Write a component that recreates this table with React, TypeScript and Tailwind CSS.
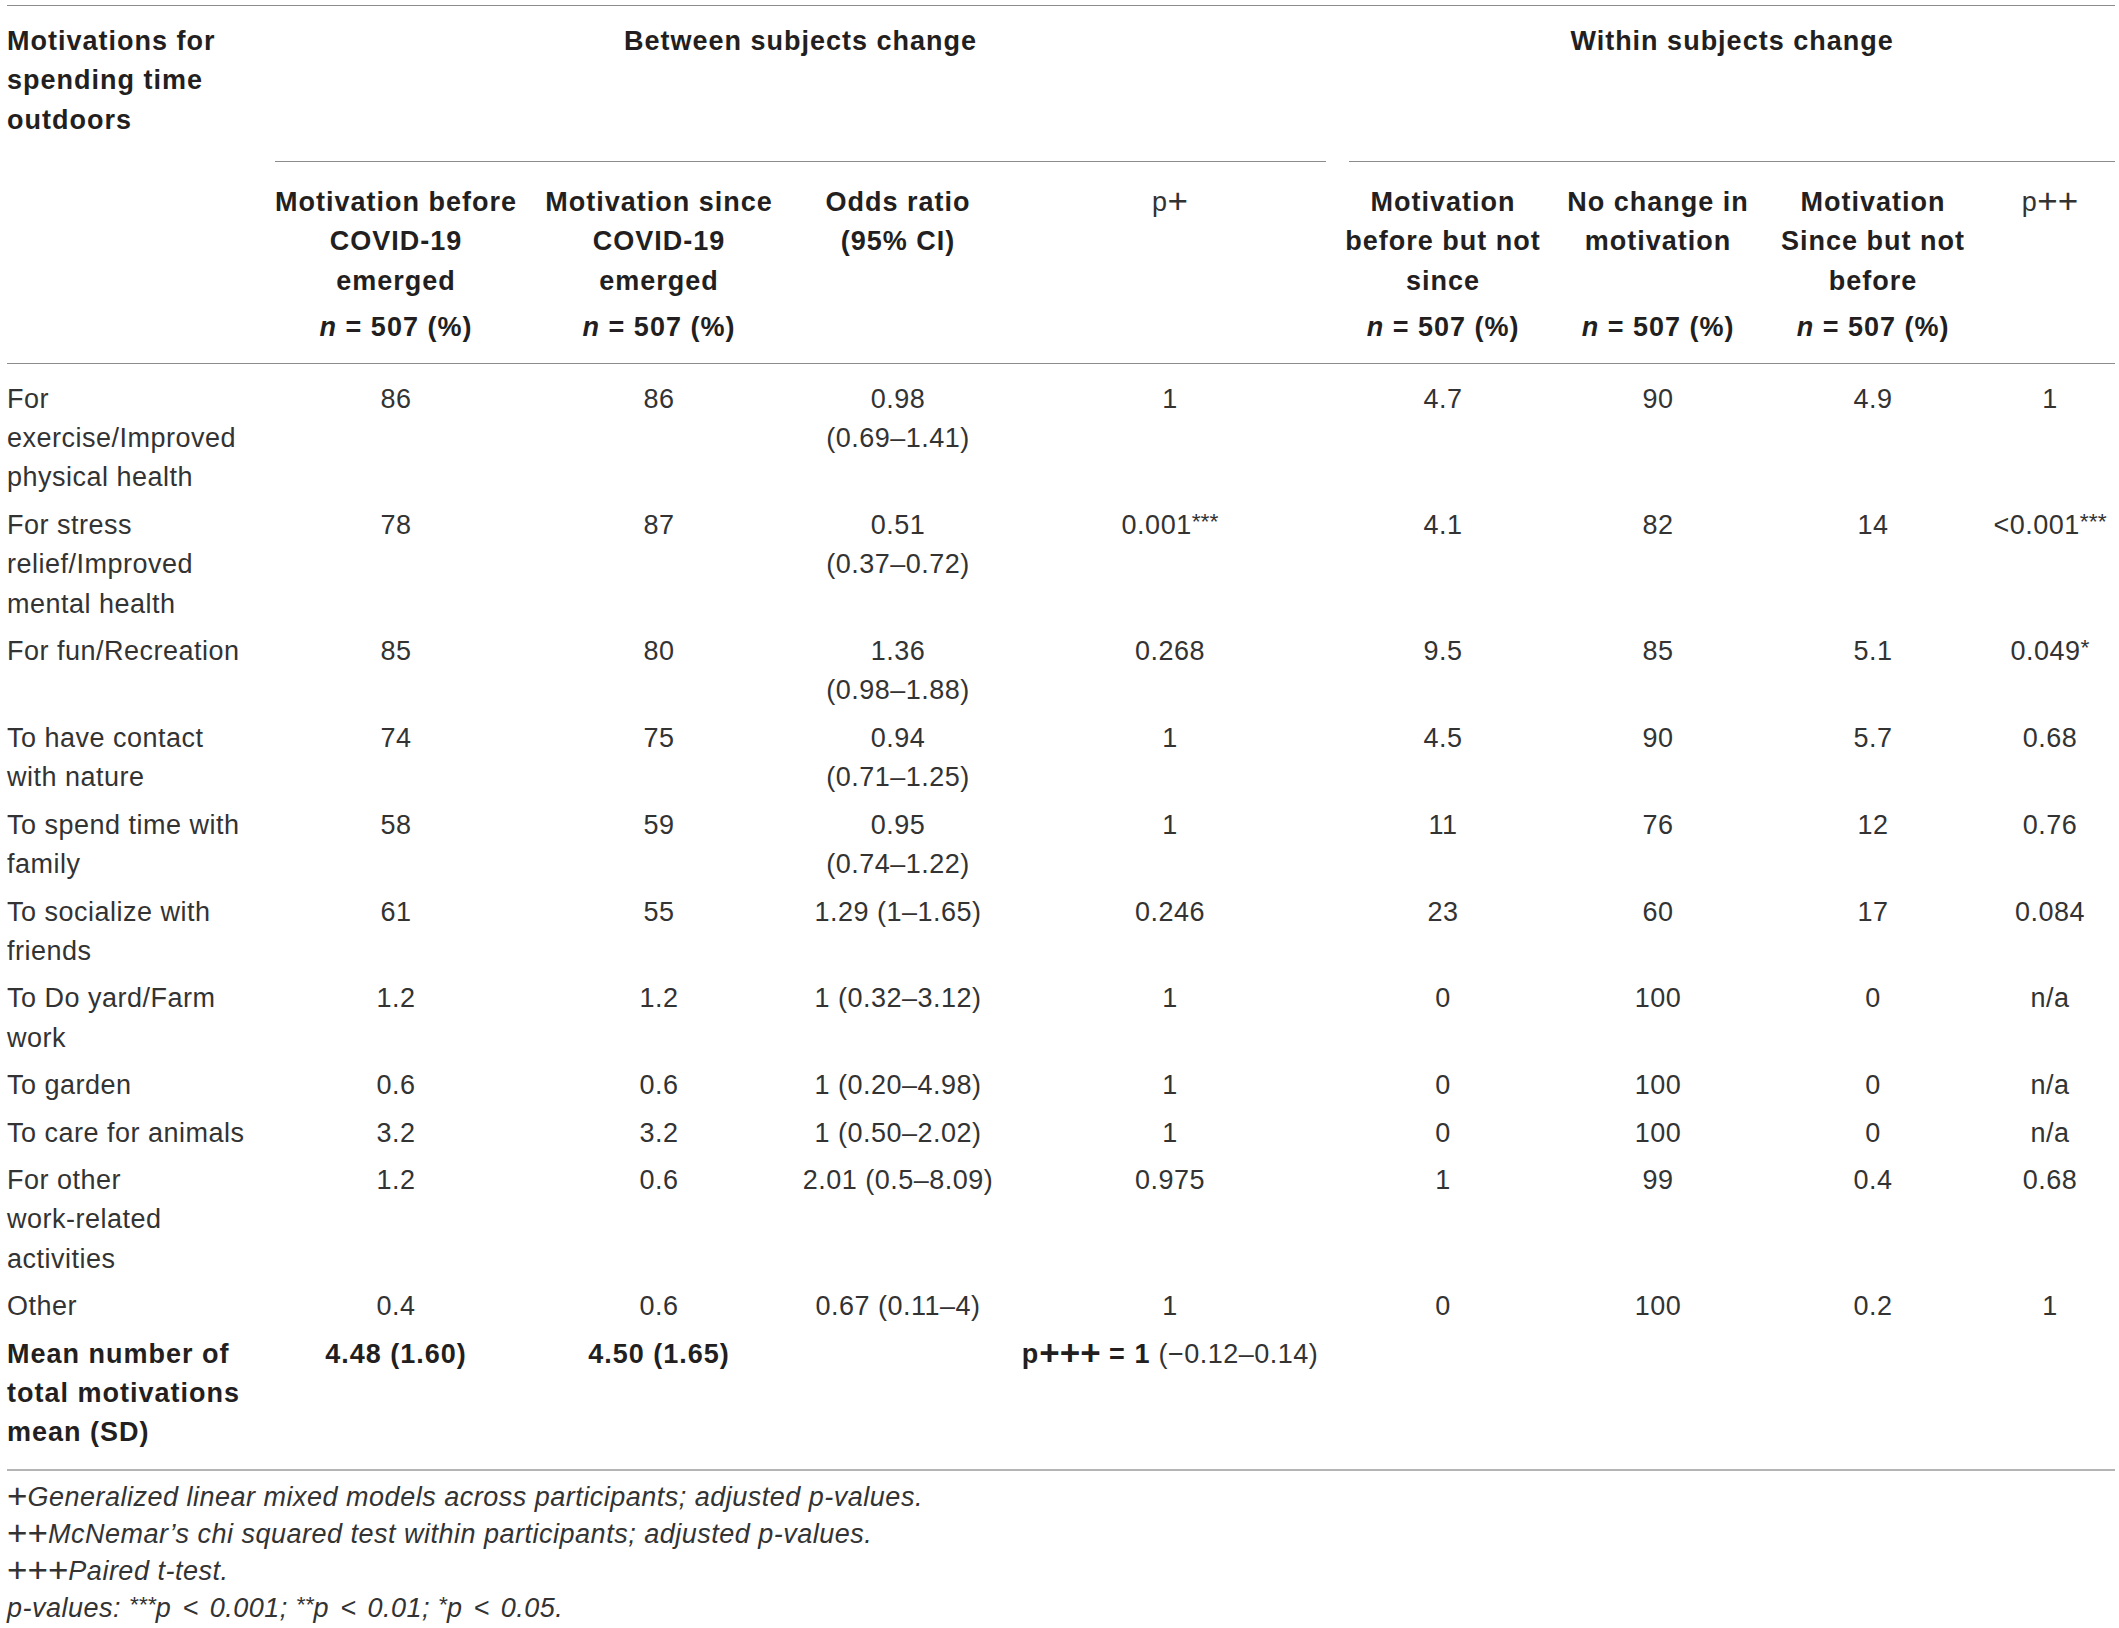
import React from "react";

type Row = { label: React.ReactNode; cells: React.ReactNode[]; bold?: boolean };

const colWidths = [
  "w-[268px]",
  "w-[242px]",
  "w-[284px]",
  "w-[194px]",
  "w-[350px]",
  "w-[196px]",
  "w-[234px]",
  "w-[210px]",
  "w-[130px]",
];

const colAlign = [
  "text-left",
  "text-center",
  "text-center",
  "text-center",
  "text-center",
  "text-center",
  "text-center",
  "text-center pr-[14px]",
  "text-center",
];

// the plus signs in the source are larger than Arial's
function Plus({ n }: { n: number }) {
  return (
    <>
      {Array.from({ length: n }).map((_, i) => (
        <span key={i} className="relative top-[2px] text-[35px] leading-[0] not-italic tracking-normal">
          +
        </span>
      ))}
    </>
  );
}

function Stars({ n }: { n: number }) {
  return <sup className="text-[0.85em] top-[-0.2em] tracking-normal">{"*".repeat(n)}</sup>;
}

function N() {
  return (
    <>
      <i>n</i> = 507 (%)
    </>
  );
}

const rows: Row[] = [
  {
    label: (
      <>
        For
        <br />
        exercise/Improved
        <br />
        physical health
      </>
    ),
    cells: ["86", "86", <>0.98<br />(0.69–1.41)</>, "1", "4.7", "90", "4.9", "1"],
  },
  {
    label: (
      <>
        For stress
        <br />
        relief/Improved
        <br />
        mental health
      </>
    ),
    cells: [
      "78",
      "87",
      <>0.51<br />(0.37–0.72)</>,
      <>0.001<Stars n={3} /></>,
      "4.1",
      "82",
      "14",
      <>&lt;0.001<Stars n={3} /></>,
    ],
  },
  {
    label: "For fun/Recreation",
    cells: ["85", "80", <>1.36<br />(0.98–1.88)</>, "0.268", "9.5", "85", "5.1", <>0.049<Stars n={1} /></>],
  },
  {
    label: (
      <>
        To have contact
        <br />
        with nature
      </>
    ),
    cells: ["74", "75", <>0.94<br />(0.71–1.25)</>, "1", "4.5", "90", "5.7", "0.68"],
  },
  {
    label: (
      <>
        To spend time with
        <br />
        family
      </>
    ),
    cells: ["58", "59", <>0.95<br />(0.74–1.22)</>, "1", "11", "76", "12", "0.76"],
  },
  {
    label: (
      <>
        To socialize with
        <br />
        friends
      </>
    ),
    cells: ["61", "55", "1.29 (1–1.65)", "0.246", "23", "60", "17", "0.084"],
  },
  {
    label: (
      <>
        To Do yard/Farm
        <br />
        work
      </>
    ),
    cells: ["1.2", "1.2", "1 (0.32–3.12)", "1", "0", "100", "0", "n/a"],
  },
  {
    label: "To garden",
    cells: ["0.6", "0.6", "1 (0.20–4.98)", "1", "0", "100", "0", "n/a"],
  },
  {
    label: "To care for animals",
    cells: ["3.2", "3.2", "1 (0.50–2.02)", "1", "0", "100", "0", "n/a"],
  },
  {
    label: (
      <>
        For other
        <br />
        work-related
        <br />
        activities
      </>
    ),
    cells: ["1.2", "0.6", "2.01 (0.5–8.09)", "0.975", "1", "99", "0.4", "0.68"],
  },
  {
    label: "Other",
    cells: ["0.4", "0.6", "0.67 (0.11–4)", "1", "0", "100", "0.2", "1"],
  },
  {
    bold: true,
    label: (
      <>
        Mean number of
        <br />
        total motivations
        <br />
        mean (SD)
      </>
    ),
    cells: [
      <b className="tracking-[1px] text-[#231f20]">4.48 (1.60)</b>,
      <b className="tracking-[1px] text-[#231f20]">4.50 (1.65)</b>,
      "",
      <>
        <b className="tracking-[1px] text-[#231f20]">
          p<Plus n={3} /> = 1
        </b>{" "}
        (−0.12–0.14)
      </>,
      "",
      "",
      "",
      "",
    ],
  },
];

const subHeads: { text: React.ReactNode; bold: boolean; n: boolean }[] = [
  { text: <>Motivation before<br />COVID-19<br />emerged</>, bold: true, n: true },
  { text: <>Motivation since<br />COVID-19<br />emerged</>, bold: true, n: true },
  { text: <>Odds ratio<br />(95% CI)</>, bold: true, n: false },
  { text: <>p<Plus n={1} /></>, bold: false, n: false },
  { text: <>Motivation<br />before but not<br />since</>, bold: true, n: true },
  { text: <>No change in<br />motivation</>, bold: true, n: true },
  { text: <>Motivation<br />Since but not<br />before</>, bold: true, n: true },
  { text: <>p<Plus n={2} /></>, bold: false, n: false },
];

const boldCls = "font-bold tracking-[1px] text-[#231f20]";

export default function App() {
  return (
    <div
      className="bg-white pt-[5px] pl-[7px] text-[27px] leading-[39.4px] tracking-[0.5px] text-[#333]"
      style={{ fontFamily: '"Liberation Sans", Arial, sans-serif' }}
    >
      <div className="h-px w-[2108px] bg-[#8c8c8c]" />
      <table className="table-fixed w-[2108px] border-separate border-spacing-0">
        <colgroup>
          {colWidths.map((w, i) => (
            <col key={i} className={w} />
          ))}
        </colgroup>
        <thead>
          <tr>
            <th
              rowSpan={3}
              className={`align-top text-left pt-[16px] ${boldCls} border-b border-[#8c8c8c] whitespace-nowrap`}
            >
              Motivations for
              <br />
              spending time
              <br />
              outdoors
            </th>
            <th colSpan={4} className={`p-0 align-top ${boldCls}`}>
              <div className="h-[156px] pt-[16px] mr-[19px] border-b border-[#8c8c8c] text-center">
                Between subjects change
              </div>
            </th>
            <th colSpan={4} className={`p-0 align-top ${boldCls}`}>
              <div className="h-[156px] pt-[16px] ml-[4px] border-b border-[#8c8c8c] text-center">
                Within subjects change
              </div>
            </th>
          </tr>
          <tr>
            {subHeads.map((h, i) => (
              <th
                key={i}
                className={`${colAlign[i + 1]} align-top pt-[21px] whitespace-nowrap ${
                  h.bold ? boldCls : "font-normal"
                }`}
              >
                {h.text}
              </th>
            ))}
          </tr>
          <tr>
            {subHeads.map((h, i) => (
              <th
                key={i}
                className={`${colAlign[i + 1]} align-top pt-[7px] pb-[15px] border-b border-[#8c8c8c] ${boldCls} whitespace-nowrap`}
              >
                {h.n ? <N /> : null}
              </th>
            ))}
          </tr>
        </thead>
        <tbody>
          {rows.map((r, ri) => {
            const pt = ri === 0 ? "pt-[16px]" : "pt-[4px]";
            const pb = ri === rows.length - 1 ? "pb-[16px]" : "pb-[4px]";
            return (
              <tr key={ri}>
                <td
                  className={`${colAlign[0]} align-top whitespace-nowrap ${pt} ${pb} ${r.bold ? boldCls : ""}`}
                >
                  {r.label}
                </td>
                {r.cells.map((c, ci) => (
                  <td key={ci} className={`${colAlign[ci + 1]} align-top whitespace-nowrap ${pt} ${pb}`}>
                    {c}
                  </td>
                ))}
              </tr>
            );
          })}
        </tbody>
      </table>
      <div className="h-[2px] w-[2108px] bg-[#b4b4b4]" />
      <div className="mt-[8px] leading-[37px] italic">
        <div>
          <Plus n={1} />Generalized linear mixed models across participants; adjusted p-values.
        </div>
        <div>
          <Plus n={2} />McNemar’s chi squared test within participants; adjusted p-values.
        </div>
        <div>
          <Plus n={3} />Paired t-test.
        </div>
        <div>
          p-values: <Stars n={3} />p <span className="mx-[3px]">&lt;</span> 0.001; <Stars n={2} />p{" "}
          <span className="mx-[3px]">&lt;</span> 0.01; <Stars n={1} />p <span className="mx-[3px]">&lt;</span> 0.05.
        </div>
      </div>
    </div>
  );
}
